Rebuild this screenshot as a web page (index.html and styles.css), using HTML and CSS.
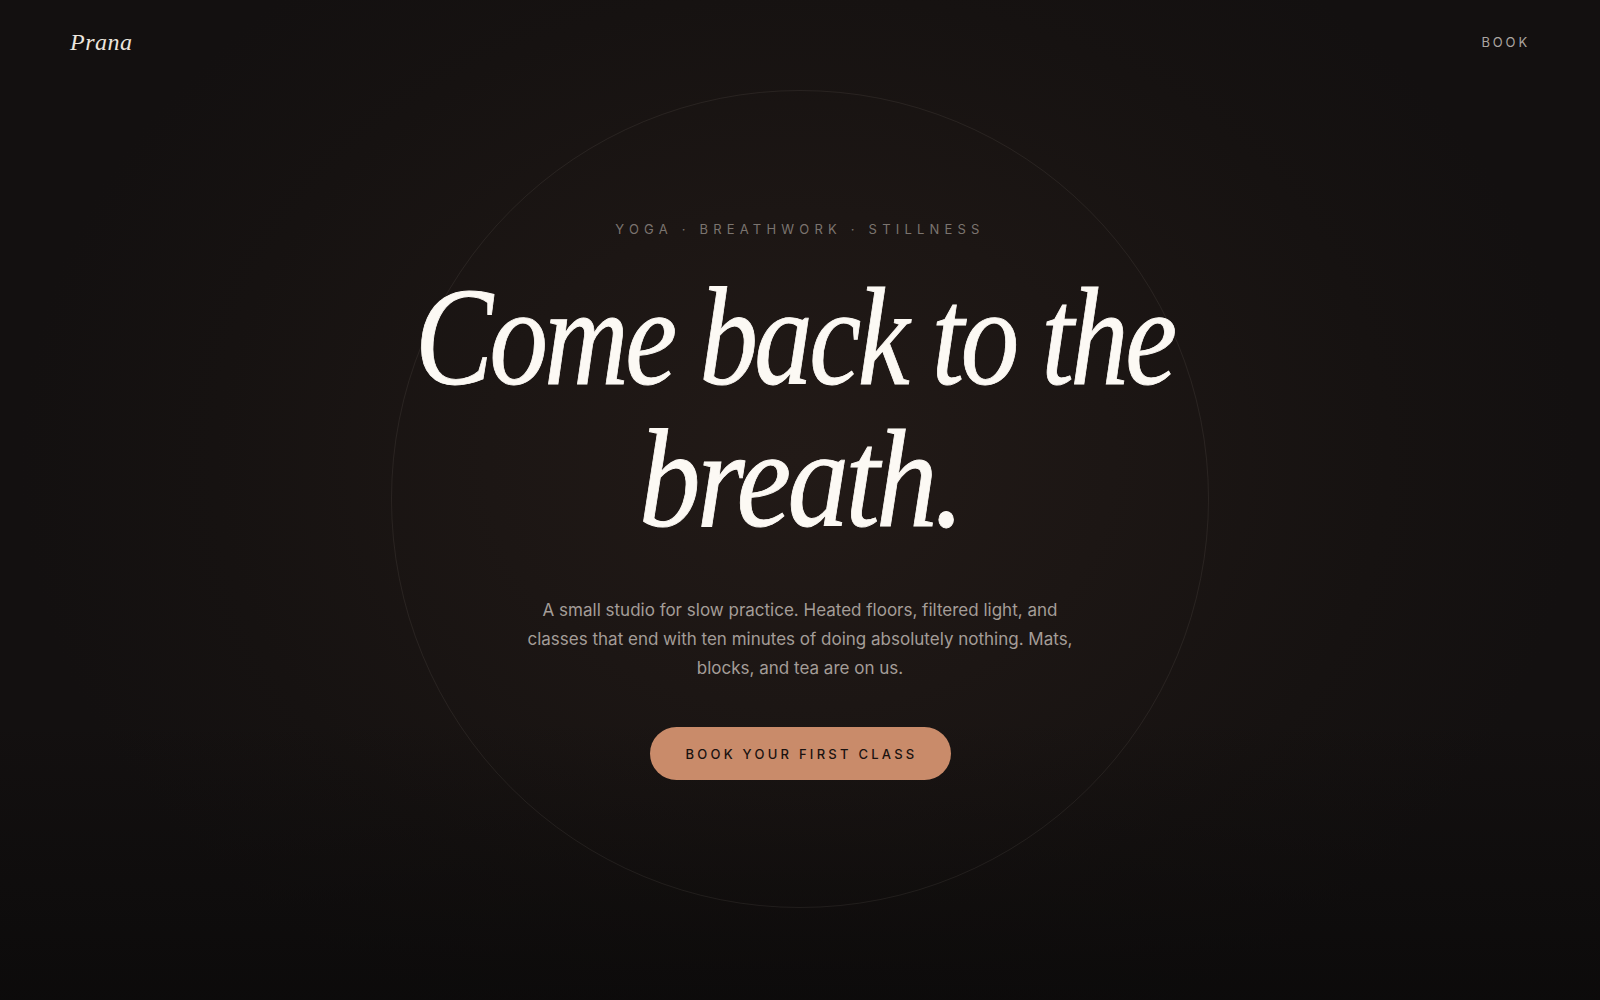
FILE: index.html
```html
<!DOCTYPE html>
<html lang="en">
<head>
<meta charset="utf-8">
<title>Prana</title>
<link rel="stylesheet" href="styles.css">
</head>
<body>
<div class="page">
  <div class="ring" aria-hidden="true"></div>
  <header class="top">
    <a class="logo" href="#">Prana</a>
    <a class="nav-book" href="#">BOOK</a>
  </header>
  <main class="hero">
    <p class="eyebrow">YOGA · BREATHWORK · STILLNESS</p>
    <h1 class="headline"><span class="hl-line hl-first">Come back to the</span><span class="hl-line hl-second">breath.</span></h1>
    <p class="lede">A small studio for slow practice. Heated floors, filtered light, and classes that end with ten minutes of doing absolutely nothing. Mats, blocks, and tea are on us.</p>
    <a class="cta" href="#">BOOK YOUR FIRST CLASS</a>
  </main>
</div>
</body>
</html>
```

FILE: styles.css
```css
* { box-sizing: border-box; }
html, body { margin: 0; padding: 0; }
body {
  background: #131010;
  font-family: Inter, "Liberation Sans", sans-serif;
  color: #a49d98;
}
a { text-decoration: none; }
.page {
  position: relative;
  width: 1600px;
  height: 1000px;
  overflow: hidden;
  background:
    linear-gradient(to bottom, rgba(10,9,9,0) 0%, rgba(10,9,9,0) 72%, rgba(10,9,9,0.75) 100%),
    radial-gradient(ellipse 780px 620px at 50% 46%, #221a17 0%, #1c1614 40%, #161211 75%, #131010 100%);
}
.ring {
  position: absolute;
  left: 391px;
  top: 90px;
  width: 818px;
  height: 818px;
  border-radius: 50%;
  border: 1px solid rgba(255, 240, 230, 0.07);
  pointer-events: none;
}
.top {
  position: relative;
  height: 84px;
  display: flex;
  align-items: center;
  justify-content: space-between;
  padding: 0 70px 0 70px;
}
.logo {
  font-family: "Liberation Serif", serif;
  font-style: italic;
  font-size: 24px;
  letter-spacing: 0.02em;
  color: #ece6df;
}
.nav-book {
  font-family: Inter, "Liberation Sans", sans-serif;
  font-size: 13px;
  letter-spacing: 0.22em;
  color: #aba5a0;
}
.hero {
  position: relative;
  display: flex;
  flex-direction: column;
  align-items: center;
  text-align: center;
}
.eyebrow {
  margin: 137px 0 0 0;
  font-size: 13px;
  line-height: 16px;
  letter-spacing: 0.4em;
  color: #7b746f;
}
.headline {
  margin: 29px 0 0 0;
  font-family: "Liberation Serif", serif;
  font-style: italic;
  font-weight: 400;
  font-size: 140px;
  line-height: 142px;
  letter-spacing: -0.03em;
  color: #fcf9f4;
  -webkit-text-stroke: 0.9px #fcf9f4;
  display: flex;
  flex-direction: column;
  align-items: center;
}
.hl-line {
  display: block;
  white-space: nowrap;
}
.hl-first { transform: translateX(-6px) scaleX(0.835); }
.hl-second { transform: scaleX(0.88); }
.lede {
  margin: 46px 0 0 0;
  max-width: 575px;
  font-size: 17px;
  line-height: 29px;
  color: #a49d98;
}
.cta {
  margin-top: 44px;
  display: inline-flex;
  align-items: center;
  justify-content: center;
  height: 53px;
  padding: 0 33px 0 36px;
  border-radius: 27px;
  background: #c98b6a;
  color: #1a1210;
  font-size: 13px;
  font-weight: 500;
  letter-spacing: 0.25em;
}
```
